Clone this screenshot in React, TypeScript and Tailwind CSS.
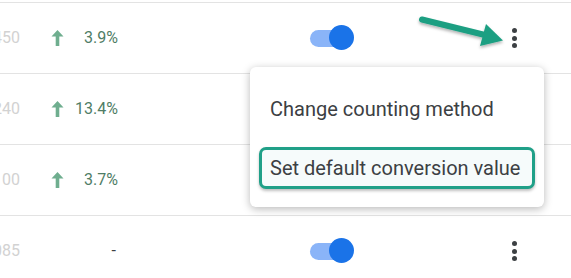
import React from "react";

const rows = [
  { num: "2,450", pct: "3.9%", up: true },
  { num: "1,240", pct: "13.4%", up: true },
  { num: "3,100", pct: "3.7%", up: true },
  { num: "1,085", pct: "-", up: false },
];

function UpArrow() {
  return (
    <svg width="13" height="18" viewBox="0 0 13 18">
      <path d="M6.5 1 L12.5 7.5 L8.3 7.5 L8.3 17 L4.7 17 L4.7 7.5 L0.5 7.5 Z" fill="#6fae8f" />
    </svg>
  );
}

function Toggle() {
  return (
    <div className="relative w-[44px] h-[26px] flex items-center">
      <div className="w-[37px] h-[17px] rounded-full bg-[#8ab4f8]" />
      <div className="absolute right-0 top-0 w-[25px] h-[25px] rounded-full bg-[#1a73e8]" />
    </div>
  );
}

function Kebab() {
  return (
    <div className="flex flex-col items-center gap-[2.5px]">
      <div className="w-[5px] h-[5px] rounded-full bg-[#3c4043]" />
      <div className="w-[5px] h-[5px] rounded-full bg-[#3c4043]" />
      <div className="w-[5px] h-[5px] rounded-full bg-[#3c4043]" />
    </div>
  );
}

export default function App() {
  return (
    <div
      className="relative w-[571px] h-[278px] bg-white overflow-hidden pt-[2px]"
      style={{ fontFamily: "Roboto, 'Liberation Sans', sans-serif" }}
    >
      <div className="border-t border-[#e3e3e3]">
        {rows.map((r, i) => (
          <div key={i} className="flex items-center h-[71px] border-b border-[#e3e3e3]">
            <div className="w-[21px] overflow-hidden flex justify-end">
              <span className="whitespace-nowrap text-[16px] text-[#d2d2d2] mr-[1px] -ml-[40px]">{r.num.slice(-3)}</span>
            </div>
            <div className="w-[29px]" />
            <div className="w-[14px] flex justify-center">{r.up ? <UpArrow /> : null}</div>
            <div className="w-[54px] text-right text-[16px] text-[#4f7d66]">
              {r.up ? r.pct : <span className="text-[#3c4043] pr-[2px]">-</span>}
            </div>
            <div className="w-[192px]" />
            <Toggle />
            <div className="w-[158px]" />
            <Kebab />
          </div>
        ))}
      </div>

      {/* menu */}
      <div className="absolute left-[250px] top-[67px] w-[294px] h-[140px] rounded-[6px] bg-white shadow-[0_2px_8px_rgba(0,0,0,0.28)] text-[#3c4043] text-[20px]">
        <div className="h-[80px] flex items-center pl-[20px] pt-[3px]">Change counting method</div>
        <div className="ml-[9px] w-[276px] h-[42px] rounded-[7px] border-[3px] border-[#20a088] bg-[#f6fbfb] shadow-[0_2px_3px_rgba(0,0,0,0.25)] flex items-center pl-[8px] whitespace-nowrap">
          Set default conversion value
        </div>
      </div>

      {/* annotation arrow */}
      <svg className="absolute left-0 top-0 pointer-events-none" width="571" height="278">
        <defs>
          <filter id="sh" x="-20%" y="-50%" width="140%" height="200%">
            <feDropShadow dx="0" dy="2" stdDeviation="1.5" floodColor="#000" floodOpacity="0.3" />
          </filter>
        </defs>
        <g filter="url(#sh)">
          <line x1="422" y1="19.5" x2="487" y2="35.5" stroke="#1d9f82" strokeWidth="6" strokeLinecap="round" />
          <polygon points="503,40.5 480,46 486,24" fill="#1d9f82" />
        </g>
      </svg>
    </div>
  );
}
